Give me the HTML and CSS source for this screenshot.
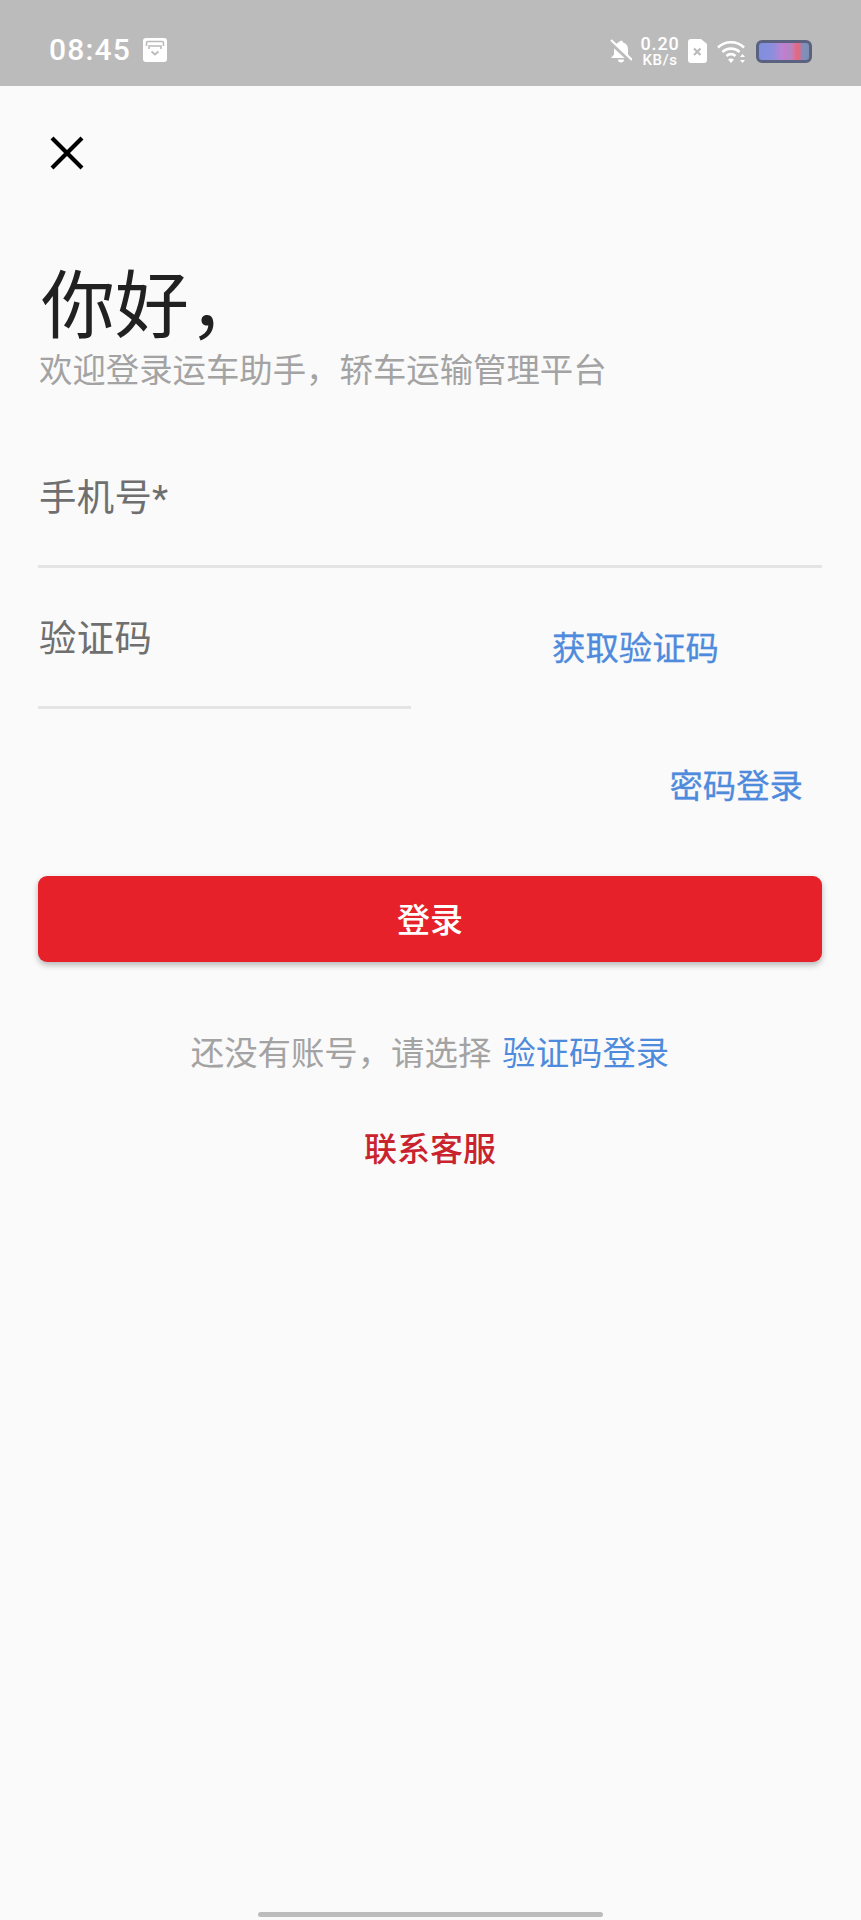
FILE: index.html
```html
<!DOCTYPE html>
<html lang="zh">
<head>
<meta charset="utf-8">
<title>登录</title>
<link rel="stylesheet" href="styles.css">
</head>
<body>
<div class="screen">
  <header class="status">
    <div class="status-left">
      <span class="time">08:45</span>
      <svg class="ic-cal" width="24" height="24" viewBox="0 0 24 24"><path fill="#fff" d="M3 0h18a3 3 0 0 1 3 3v18a3 3 0 0 1-3 3H3a3 3 0 0 1-3-3V3a3 3 0 0 1 3-3z"/><path fill="none" stroke="#bbb" stroke-width="1.6" d="M3.5 8V5a1.5 1.5 0 0 1 1.500-1.500h14A1.500 1.500 0 0 1 20.500 5v3M6 11V8h12v3"/><path fill="none" stroke="#bbb" stroke-width="1.800" d="M8.500 13.500l3.500 3 3.500-3"/></svg>
    </div>
    <div class="status-right">
      <svg class="ic-bell" width="22" height="24" viewBox="0 0 22 24"><path fill="#fff" d="M11 1.500a2 2 0 0 1 2 2c3.500.8 5 3.500 5 7v5l3 3.500H1l3-3.500v-9L11 1.500zM8 20.500h6a3 3 0 0 1-6 0z"/><path stroke="#bbb" stroke-width="4" d="M0 3l22 20"/><path stroke="#fff" stroke-width="2" d="M1 1l21 20"/></svg>
      <div class="speed"><span class="speed-num">0.20</span><span class="speed-unit">KB/s</span></div>
      <svg class="ic-sim" width="19" height="24" viewBox="0 0 19 24"><path fill="#fff" d="M3 0h10l6 5v16a3 3 0 0 1-3 3H3a3 3 0 0 1-3-3V3a3 3 0 0 1 3-3z"/><path stroke="#bbb" stroke-width="2.200" d="M6 9.500l6.500 6.500M12.500 9.500L6 16"/></svg>
      <svg class="ic-wifi" width="29" height="23" viewBox="0 0 29 23"><g fill="none" stroke="#fff" stroke-width="2.600"><path d="M1 7.500C8 .5 20 .5 27 7.500"/><path d="M5.500 12c4.500-4.500 12.500-4.500 17 0"/><path d="M9.500 16c2.500-2.500 6.500-2.500 9 0"/></g><path fill="#fff" d="M14 23l-3-3.500c1.800-1.300 4.200-1.300 6 0z"/><path fill="#fff" d="M25.500 14l2.500 3h-5zM25.500 23l-2.500-3h5z"/></svg>
      <div class="battery"></div>
    </div>
  </header>

  <main class="page">
    <button class="close" aria-label="关闭">
      <svg width="34" height="34" viewBox="0 0 34 34"><path fill="none" stroke="#000" stroke-width="4.200" d="M2 2l30 30M32 2L2 32"/></svg>
    </button>

    <h1 class="title">你好，</h1>
    <p class="subtitle">欢迎登录运车助手，轿车运输管理平台</p>

    <div class="field field-phone">
      <span class="label">手机号*</span>
    </div>

    <div class="code-row">
      <div class="field field-code">
        <span class="label">验证码</span>
      </div>
      <a class="link get-code">获取验证码</a>
    </div>

    <div class="alt-row"><a class="link">密码登录</a></div>

    <button class="submit">登录</button>

    <p class="register"><span class="muted">还没有账号，请选择</span><a class="link register-link">验证码登录</a></p>

    <p class="service">联系客服</p>
  </main>

  <div class="home-bar"></div>
</div>
</body>
</html>
```
FILE: styles.css
```css
* { box-sizing: border-box; }
html, body { margin: 0; padding: 0; }
body {
  font-family: Roboto, "Noto Sans CJK SC", sans-serif;
  background: #fafafa;
}
.screen {
  width: 861px;
  height: 1920px;
  display: flex;
  flex-direction: column;
  background: #fafafa;
}
.status {
  height: 86px;
  flex: none;
  background: #bbbbbb;
  color: #fff;
  display: flex;
  justify-content: space-between;
  align-items: flex-start;
  padding: 37px 49px 0 49px;
}
.status-left { display: flex; align-items: center; gap: 12px; }
.time { font-size: 30px; line-height: 26px; font-weight: 500; letter-spacing: 1.2px; }
.status-right { display: flex; align-items: flex-start; }
.ic-bell { margin-top: 2px; }
.speed { display: flex; flex-direction: column; align-items: center; width: 40px; margin-left: 8px; font-weight: 500; }
.speed-num { font-size: 18px; line-height: 14px; letter-spacing: .8px; }
.speed-unit { font-size: 15px; line-height: 14px; margin-top: 2px; letter-spacing: .6px; }
.ic-sim { margin: 2px 0 0 8px; }
.ic-wifi { margin: 3px 0 0 10px; }
.battery {
  width: 56px;
  height: 23px;
  margin: 3px 0 0 10px;
  border: 3px solid #5b6280;
  border-radius: 6px;
  background: linear-gradient(90deg, #7f8fe0 0%, #8a8fdc 25%, #b884d4 45%, #c47cc8 54%, #a98ac8 60%, #c97cb8 66%, #e06a80 76%, #e06a80 80%, #8090c0 88%, #7f8fb0 100%);
}

.page {
  flex: 1;
  padding: 0 39px 0 38px;
  display: flex;
  flex-direction: column;
}
.close {
  width: 34px;
  height: 34px;
  margin: 50px 0 0 12px;
  padding: 0;
  border: 0;
  background: none;
  display: block;
}
.close svg { display: block; }
.title {
  margin: 97px 0 0 3px;
  font-size: 74px;
  line-height: 80px;
  font-weight: 400;
  color: #212121;
}
.subtitle {
  margin: 2px 0 0 1px;
  font-size: 33.4px;
  line-height: 44px;
  color: #a3a3a3;
}
.field { border-bottom: 3px solid #e4e4e4; }
.label {
  display: block;
  padding-left: 1px;
  font-size: 37.4px;
  line-height: 44px;
  letter-spacing: .3px;
  color: #6f6f6f;
}
.field-phone { height: 172px; padding-top: 80px; margin-top: 3px; }
.code-row { display: flex; justify-content: space-between; align-items: flex-start; }
.field-code { width: 373px; height: 141px; padding-top: 49px; }
.get-code { margin: 59px 103px 0 0; }
.link { font-size: 33.4px; line-height: 44px; font-weight: 400; -webkit-text-stroke: .3px #4f8bdc; color: #4f8bdc; }
.alt-row { display: flex; justify-content: flex-end; margin-top: 56px; padding-right: 19px; }
.submit {
  display: block;
  width: 784px;
  height: 86px;
  margin-top: 67px;
  padding: 0 0 3px;
  border: 0;
  border-radius: 9px;
  background: #e6212a;
  box-shadow: 0 3px 6px rgba(0,0,0,.28);
  color: #fff;
  font-family: inherit;
  font-size: 33px;
  font-weight: 500;
}
.register {
  margin: 70px 0 0;
  text-align: center;
  font-size: 33.4px;
  line-height: 44px;
}
.register-link { margin-left: 11px; -webkit-text-stroke: 0; }
.muted { color: #a3a3a3; }
.service {
  margin: 52px 0 0;
  text-align: center;
  font-size: 33px;
  line-height: 44px;
  font-weight: 500;
  color: #c9232e;
}
.home-bar {
  flex: none;
  width: 345px;
  height: 5px;
  margin: 0 0 3px 258px;
  border-radius: 3px;
  background: #bcbcbc;
}
```
